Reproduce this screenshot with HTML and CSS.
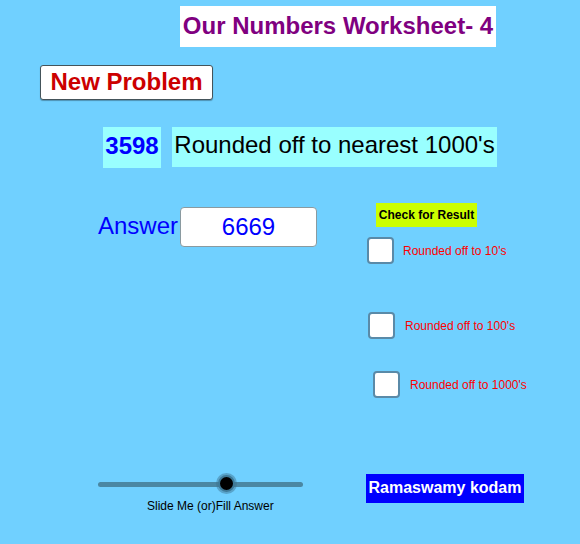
FILE: index.html
```html
<!DOCTYPE html>
<html>
<head>
<meta charset="utf-8">
<link rel="stylesheet" href="styles.css">
</head>
<body>
<div class="canvas">
  <div class="title">Our Numbers Worksheet- 4</div>
  <button class="new-btn">New Problem</button>
  <div class="num">3598</div>
  <div class="question">Rounded off to nearest 1000's</div>
  <div class="answer-label">Answer</div>
  <div class="answer-box">6669</div>
  <div class="check">Check for Result</div>
  <div class="cb cb1"></div><div class="cb-label cl1">Rounded off to 10's</div>
  <div class="cb cb2"></div><div class="cb-label cl2">Rounded off to 100's</div>
  <div class="cb cb3"></div><div class="cb-label cl3">Rounded off to 1000's</div>
  <div class="slider-track"></div>
  <div class="slider-knob"></div>
  <div class="slider-label">Slide Me (or)Fill Answer</div>
  <div class="author">Ramaswamy kodam</div>
</div>
</body>
</html>
```
FILE: styles.css
```css
html, body { margin: 0; padding: 0; }
body { background: #70d0ff; font-family: "Liberation Sans", Arial, sans-serif; }
.canvas { position: relative; width: 580px; height: 544px; background: #70d0ff; overflow: hidden; }
.title { position: absolute; left: 180px; top: 6px; width: 316px; height: 41px; background: #fff;
  color: #800080; font-weight: bold; font-size: 24px; line-height: 39px; text-align: center; }
.new-btn { position: absolute; left: 40px; top: 65px; width: 173px; height: 35px; box-sizing: border-box; background: #fff;
  border: 1px solid #44545a; border-radius: 3px; color: #cc0000; font-family: "Liberation Sans", Arial, sans-serif;
  font-weight: bold; font-size: 24px; padding: 0 0 1px 0; line-height: 26px; text-align: center; box-shadow: 0 1px 1px rgba(0,0,0,0.3); }
.num { position: absolute; left: 103px; top: 127px; width: 58px; height: 41px; background: #99ffff;
  color: #0000ff; font-weight: bold; font-size: 24px; line-height: 37px; text-align: center; }
.question { position: absolute; left: 172px; top: 127px; width: 325px; height: 40px; background: #99ffff;
  color: #000; font-size: 24px; line-height: 36px; text-align: center; }
.answer-label { position: absolute; left: 98px; top: 211px; color: #0000ff; font-size: 24px; line-height: 30px; }
.answer-box { position: absolute; left: 180px; top: 207px; width: 135px; height: 38px; background: #fff;
  border: 1px solid #8a9aa0; border-radius: 4px; color: #0000ff; font-size: 24px; line-height: 37px; text-align: center; }
.check { position: absolute; left: 376px; top: 203px; width: 101px; height: 24px; background: #ccff00;
  color: #000; font-weight: bold; font-size: 12px; line-height: 24px; text-align: center; }
.cb { position: absolute; width: 23px; height: 23px; background: #fff; border: 2px solid #5a8aa8; border-radius: 4px; }
.cb1 { left: 367px; top: 237px; }
.cb2 { left: 368px; top: 312px; }
.cb3 { left: 373px; top: 371px; }
.cb-label { position: absolute; color: #ff0000; font-size: 12px; line-height: 14px; }
.cl1 { left: 403px; top: 244px; }
.cl2 { left: 405px; top: 319px; }
.cl3 { left: 410px; top: 378px; }
.slider-track { position: absolute; left: 98px; top: 482px; width: 205px; height: 5px; background: #4a87a3; border-radius: 3px; }
.slider-knob { position: absolute; left: 218px; top: 475px; width: 13px; height: 13px; background: #000;
  border: 2px solid #3e7a98; border-radius: 50%; box-shadow: 0 0 0 2px rgba(60,110,140,0.45); }
.slider-label { position: absolute; left: 147px; top: 499px; color: #000; font-size: 12px; line-height: 14px; }
.author { position: absolute; left: 366px; top: 474px; width: 158px; height: 29px; background: #0000ff;
  color: #fff; font-weight: bold; font-size: 16px; line-height: 28px; text-align: center; }
```
